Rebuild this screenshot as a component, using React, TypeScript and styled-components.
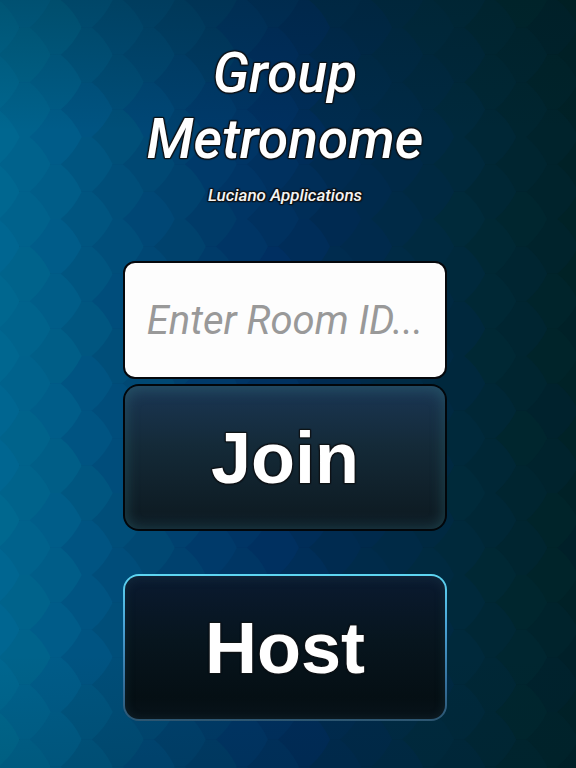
import React from "react";
import styled, { createGlobalStyle } from "styled-components";

const GlobalStyle = createGlobalStyle`
  *, *::before, *::after { box-sizing: border-box; }
  html, body { margin: 0; min-height: 100%; background: #002b50; }
`;

const outline = (width: number) =>
  [
    [-1, 0],
    [1, 0],
    [0, -1],
    [0, 1],
    [-1, -1],
    [1, 1],
    [-1, 1],
    [1, -1],
  ]
    .map(([x, y]) => `${x * width}px ${y * width}px 1px #101418`)
    .join(", ");

const Page = styled.main`
  position: relative;
  isolation: isolate;
  min-height: 100vh;
  overflow: hidden;
  display: flex;
  flex-direction: column;
  align-items: center;
  padding: 40px 6px 48px 0;
  font-family: Roboto, "Liberation Sans", sans-serif;
`;

const Backdrop = styled.svg`
  position: absolute;
  inset: 0;
  z-index: -1;
  width: 100%;
  height: 100%;
`;

const Title = styled.h1`
  margin: 0;
  width: 57%;
  color: #fff;
  font-size: 55px;
  font-style: italic;
  font-weight: 500;
  line-height: 66px;
  text-align: center;
  text-shadow: ${outline(1)};
`;

const Subtitle = styled.p`
  margin: 12px 0 0;
  color: #f4f4f4;
  font-size: 17px;
  font-style: italic;
  font-weight: 500;
  line-height: 22px;
  text-align: center;
  text-shadow: ${outline(1)};
`;

const Form = styled.form`
  width: 57%;
  margin-top: 55px;
  display: flex;
  flex-direction: column;
`;

const RoomInput = styled.input`
  width: 100%;
  height: 118px;
  padding: 0 16px;
  border: 2px solid #05080c;
  border-radius: 12px;
  background: #fdfdfd;
  color: #222;
  font-family: inherit;
  font-size: 40px;
  font-style: italic;
  font-weight: 400;
  text-align: center;
  &::placeholder { color: #999; opacity: 1; }
`;

const ActionButton = styled.button<{ $primary?: boolean }>`
  width: 100%;
  height: 147px;
  margin-top: ${(p) => (p.$primary ? 43 : 5)}px;
  padding: 0;
  border: 2px solid transparent;
  border-radius: 16px;
  background: ${(p) =>
    p.$primary
      ? `linear-gradient(#0a1a30, #07151e 45%, #050f14 85%, #08131a) padding-box,
         linear-gradient(#5ed6f2, #4aa3d6 35%, #35709c 75%, #2c5570) border-box`
      : `linear-gradient(#1a3654, #142a38 42%, #0e1c24 88%, #10222c) padding-box,
         linear-gradient(#02060a, #02060a) border-box`};
  box-shadow: ${(p) =>
    p.$primary
      ? "inset 0 2px 10px 1px rgba(40, 80, 90, 0.25)"
      : "inset 0 3px 14px 1px rgba(50, 112, 125, 0.45)"};
  color: #fff;
  font-family: "Liberation Sans", sans-serif;
  font-size: 72px;
  font-weight: 700;
  line-height: 88px;
  text-shadow: ${outline(1)};
  cursor: pointer;
`;

const COLUMN = 31;
const ROW = 54.7;

const stops: [number, number, number, number][] = [
  [0, 0, 103, 144],
  [60, 0, 93, 136],
  [110, 0, 80, 124],
  [160, 0, 70, 115],
  [220, 0, 58, 104],
  [290, 0, 46, 94],
  [340, 0, 43, 80],
  [400, 0, 42, 70],
  [460, 0, 41, 60],
  [520, 0, 38, 48],
  [600, 0, 32, 38],
];

function shade(x: number, seed: number) {
  const at = Math.max(0, Math.min(599, x));
  const i = stops.findIndex((s, n) => n > 0 && at < s[0]);
  const [x0, , g0, b0] = stops[i - 1];
  const [x1, , g1, b1] = stops[i];
  const t = (at - x0) / (x1 - x0);
  const jitter = (Math.abs(Math.sin(seed * 12.9898) * 43758.5453) % 1) - 0.5;
  const g = Math.round(g0 + (g1 - g0) * t + jitter * 2);
  const b = Math.round(b0 + (b1 - b0) * t - jitter * 3);
  return `rgb(0, ${g}, ${b})`;
}

const scales: { key: string; d: string; fill: string }[] = [];
for (let c = 19; c >= 0; c--) {
  const tip = 20 + c * COLUMN;
  const notch = tip - 21;
  const shift = c % 2 === 0 ? 0 : ROW / 2;
  for (let r = -1; r < 15; r++) {
    const y = r * ROW + shift;
    scales.push({
      key: `${c}-${r}`,
      d: `M${tip - 62} ${y} H${notch} Q${tip - 8} ${y + 10} ${tip} ${y + ROW / 2} Q${tip - 8} ${y + 44} ${notch} ${y + ROW} H${tip - 62}Z`,
      fill: shade(tip - 22, c * 17 + r + 3),
    });
  }
}

function ScaleBackdrop() {
  return (
    <Backdrop viewBox="0 0 576 768" preserveAspectRatio="xMidYMid slice" aria-hidden="true">
      <defs>
        <linearGradient id="edgeShade" x1="0" y1="0" x2="0" y2="1">
          <stop offset="0" stopColor="#001a1a" stopOpacity="0.24" />
          <stop offset="0.17" stopColor="#001a1a" stopOpacity="0" />
          <stop offset="0.85" stopColor="#001a1a" stopOpacity="0" />
          <stop offset="1" stopColor="#001a1a" stopOpacity="0.12" />
        </linearGradient>
      </defs>
      <rect width="576" height="768" fill="#002024" />
      {scales.map((s) => (
        <path key={s.key} d={s.d} fill={s.fill} />
      ))}
      <rect width="576" height="768" fill="url(#edgeShade)" />
    </Backdrop>
  );
}

export default function App() {
  return (
    <>
      <GlobalStyle />
      <Page>
        <ScaleBackdrop />
        <Title>Group Metronome</Title>
        <Subtitle>Luciano Applications</Subtitle>
        <Form onSubmit={(e) => e.preventDefault()}>
          <RoomInput type="text" aria-label="Room ID" placeholder="Enter Room ID..." />
          <ActionButton type="submit">Join</ActionButton>
          <ActionButton type="button" $primary>
            Host
          </ActionButton>
        </Form>
      </Page>
    </>
  );
}
